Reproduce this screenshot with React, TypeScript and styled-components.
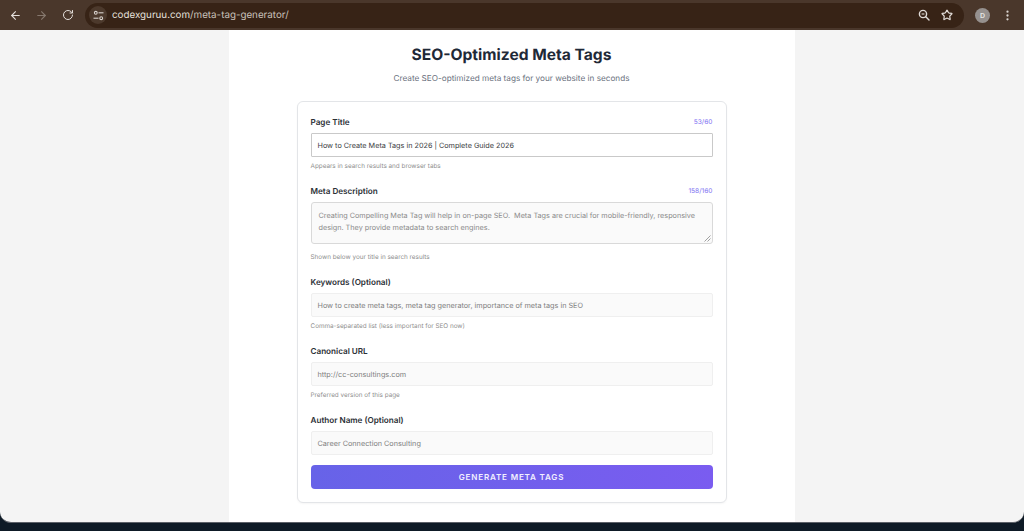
import React from 'react'
import styled, { createGlobalStyle } from 'styled-components'
import { ArrowLeft, ArrowRight, RotateCw, Star, EllipsisVertical } from 'lucide-react'

const GlobalStyle = createGlobalStyle`
  html, body {
    margin: 0;
    padding: 0;
    height: 100%;
    overflow: hidden;
    background: #0e1a26;
    text-rendering: geometricPrecision;
  }
  * {
    box-sizing: border-box;
  }
`

const fields = [
  { label: 'Keywords (Optional)', value: 'How to create meta tags, meta tag generator, importance of meta tags in SEO', hint: 'Comma-separated list (less important for SEO now)' },
  { label: 'Canonical URL', value: 'http://cc-consultings.com', hint: 'Preferred version of this page' },
  { label: 'Author Name (Optional)', value: 'Career Connection Consulting' },
]

const App = () => {
  return (
    <Screen>
      <GlobalStyle />
      <Toolbar>
        <NavGroup>
          <NavIcon><ArrowLeft size={13} strokeWidth={2} /></NavIcon>
          <NavIcon $dim><ArrowRight size={13} strokeWidth={2} /></NavIcon>
          <NavIcon><RotateCw size={12} strokeWidth={2} /></NavIcon>
        </NavGroup>
        <Omnibox>
          <SiteChip>
            <svg width="11" height="11" viewBox="0 0 11 11" fill="none" stroke="#d8d2cd" strokeWidth="1.1">
              <circle cx="2.8" cy="2.8" r="1.4" />
              <path d="M5.5 2.8H10.5" />
              <circle cx="8.2" cy="8.2" r="1.4" />
              <path d="M0.5 8.2H5.5" />
            </svg>
          </SiteChip>
          <Url>codexguruu.com<UrlPath>/meta-tag-generator/</UrlPath></Url>
          <OmniIcon>
            <svg width="12" height="12" viewBox="0 0 12 12" fill="none" stroke="#e0dbd7" strokeWidth="1.4">
              <circle cx="5" cy="5" r="3.6" />
              <path d="M3.6 5H6.4" strokeWidth="1.1" />
              <path d="M7.8 7.8L11 11" strokeLinecap="round" />
            </svg>
          </OmniIcon>
          <OmniIcon><Star size={12} strokeWidth={2.4} /></OmniIcon>
        </Omnibox>
        <Avatar>D</Avatar>
        <MenuIcon><EllipsisVertical size={13} strokeWidth={2.2} /></MenuIcon>
      </Toolbar>

      <Viewport>
        <Column>
          <Heading>SEO-Optimized Meta Tags</Heading>
          <Subheading>Create SEO-optimized meta tags for your website in seconds</Subheading>

          <Card>
            <LabelRow>
              <Label>Page Title</Label>
              <Counter>53/60</Counter>
            </LabelRow>
            <Input $active>How to Create Meta Tags in 2026 | Complete Guide 2026</Input>
            <Hint>Appears in search results and browser tabs</Hint>

            <LabelRow>
              <Label>Meta Description</Label>
              <Counter>158/160</Counter>
            </LabelRow>
            <TextArea>
              Creating Compelling Meta Tag will help in on-page SEO.&nbsp; Meta Tags are crucial for mobile-friendly, responsive design. They provide metadata to search engines.
              <Grip width="7" height="7" viewBox="0 0 7 7" stroke="#8a8a8a" strokeWidth="0.8">
                <path d="M0.5 6.5L6.5 0.5M3.5 6.5L6.5 3.5" />
              </Grip>
            </TextArea>
            <Hint $wide>Shown below your title in search results</Hint>

            {fields.map((f) => (
              <React.Fragment key={f.label}>
                <LabelRow>
                  <Label>{f.label}</Label>
                </LabelRow>
                <Input>{f.value}</Input>
                {f.hint && <Hint>{f.hint}</Hint>}
              </React.Fragment>
            ))}

            <GenerateButton>GENERATE META TAGS</GenerateButton>
          </Card>
        </Column>
      </Viewport>
    </Screen>
  )
}

const Screen = styled.div`
  width: 1024px;
  height: 531px;
  display: flex;
  flex-direction: column;
  overflow: hidden;
  background: #0e1a26;
  font-family: Inter, 'Liberation Sans', sans-serif;
`

const Toolbar = styled.div`
  height: 30px;
  flex: none;
  display: flex;
  align-items: center;
  padding: 0 0 0 9px;
  background: #4a372b;
`

const NavGroup = styled.div`
  display: flex;
  gap: 13px;
  margin-right: 11px;
`

const NavIcon = styled.span<{ $dim?: boolean }>`
  width: 13px;
  height: 13px;
  display: flex;
  align-items: center;
  justify-content: center;
  color: ${(p) => (p.$dim ? '#86786e' : '#e4dfdb')};
`

const Omnibox = styled.div`
  width: 879px;
  height: 25px;
  padding: 0 11px 0 4px;
  display: flex;
  align-items: center;
  border-radius: 13px;
  background: #372316;
`

const SiteChip = styled.span`
  width: 18px;
  height: 18px;
  margin-right: 5px;
  display: flex;
  align-items: center;
  justify-content: center;
  border-radius: 50%;
  background: #4c392c;
`

const Url = styled.span`
  flex: 1;
  font-size: 9.8px;
  color: #e6e1dd;
  white-space: nowrap;
`

const UrlPath = styled.span`
  color: #c9c2bc;
`

const OmniIcon = styled.span`
  width: 12px;
  height: 12px;
  margin-left: 11px;
  display: flex;
  color: #e0dbd7;
`

const Avatar = styled.span`
  width: 15px;
  height: 15px;
  margin-left: 11px;
  display: flex;
  align-items: center;
  justify-content: center;
  border-radius: 50%;
  background: #96918f;
  color: #e8e6e5;
  font-size: 7px;
  font-weight: 600;
`

const MenuIcon = styled.span`
  width: 13px;
  height: 13px;
  margin-left: 11px;
  display: flex;
  color: #d9d4d0;
`

const Viewport = styled.div`
  height: 493px;
  flex: none;
  display: flex;
  justify-content: center;
  overflow: hidden;
  background: #f4f4f4;
  border-radius: 0 0 11px 11px;
  border-bottom: 1px solid #5c6068;
`

const Column = styled.main`
  width: 566px;
  margin-left: -1px;
  padding: 15px 68px 0;
  background: #fff;
`

const Heading = styled.h1`
  margin: 0;
  text-align: center;
  font-family: Inter, 'Liberation Sans', sans-serif;
  font-size: 15.6px;
  line-height: 20px;
  font-weight: 700;
  color: #1f2937;
`

const Subheading = styled.p`
  margin: 7px 0 0;
  text-align: center;
  font-size: 8.2px;
  line-height: 12px;
  color: #6b7280;
`

const Card = styled.section`
  height: 402px;
  margin-top: 17px;
  padding: 13px 13px 0;
  background: #fff;
  border: 1px solid #e3e5e8;
  border-radius: 6px;
  box-shadow: 0 1px 2px rgba(0, 0, 0, 0.04);
`

const LabelRow = styled.div`
  height: 14px;
  display: flex;
  align-items: center;
  justify-content: space-between;
`

const Label = styled.label`
  font-size: 8.15px;
  font-weight: 600;
  color: #2b2f36;
`

const Counter = styled.span`
  font-size: 6.6px;
  font-weight: 400;
  color: #7f72f2;
`

const Input = styled.div<{ $active?: boolean }>`
  height: 24px;
  margin-top: 4px;
  padding: 0 6px;
  display: flex;
  align-items: center;
  font-size: 7.25px;
  white-space: nowrap;
  border-radius: ${(p) => (p.$active ? '1px' : '2px')};
  border: 1px solid ${(p) => (p.$active ? '#c9c9c9' : '#efefef')};
  background: ${(p) => (p.$active ? '#fff' : '#fafafa')};
  color: ${(p) => (p.$active ? '#3a3d42' : '#808080')};
`

const TextArea = styled.div`
  position: relative;
  height: 42px;
  margin-top: 4px;
  padding: 7px 7px 0;
  font-size: 7.25px;
  line-height: 12px;
  color: #8a8a8a;
  background: #fafafa;
  border: 1px solid #d9d9d9;
  border-radius: 3px;
`

const Grip = styled.svg`
  position: absolute;
  right: 1px;
  bottom: 1px;
`

const Hint = styled.div<{ $wide?: boolean }>`
  height: 10px;
  margin: ${(p) => (p.$wide ? '8px' : '4px')} 0 13px;
  font-size: 6.35px;
  line-height: 10px;
  color: #8f8f8f;
`

const GenerateButton = styled.button`
  width: 100%;
  height: 24px;
  margin-top: 10px;
  padding: 0;
  border: 0;
  border-radius: 4px;
  background: linear-gradient(90deg, #6763e8, #7a5cf0);
  color: #f2f0ff;
  font-family: Inter, 'Liberation Sans', sans-serif;
  font-size: 8.1px;
  font-weight: 600;
  letter-spacing: 0.8px;
`

export default App
